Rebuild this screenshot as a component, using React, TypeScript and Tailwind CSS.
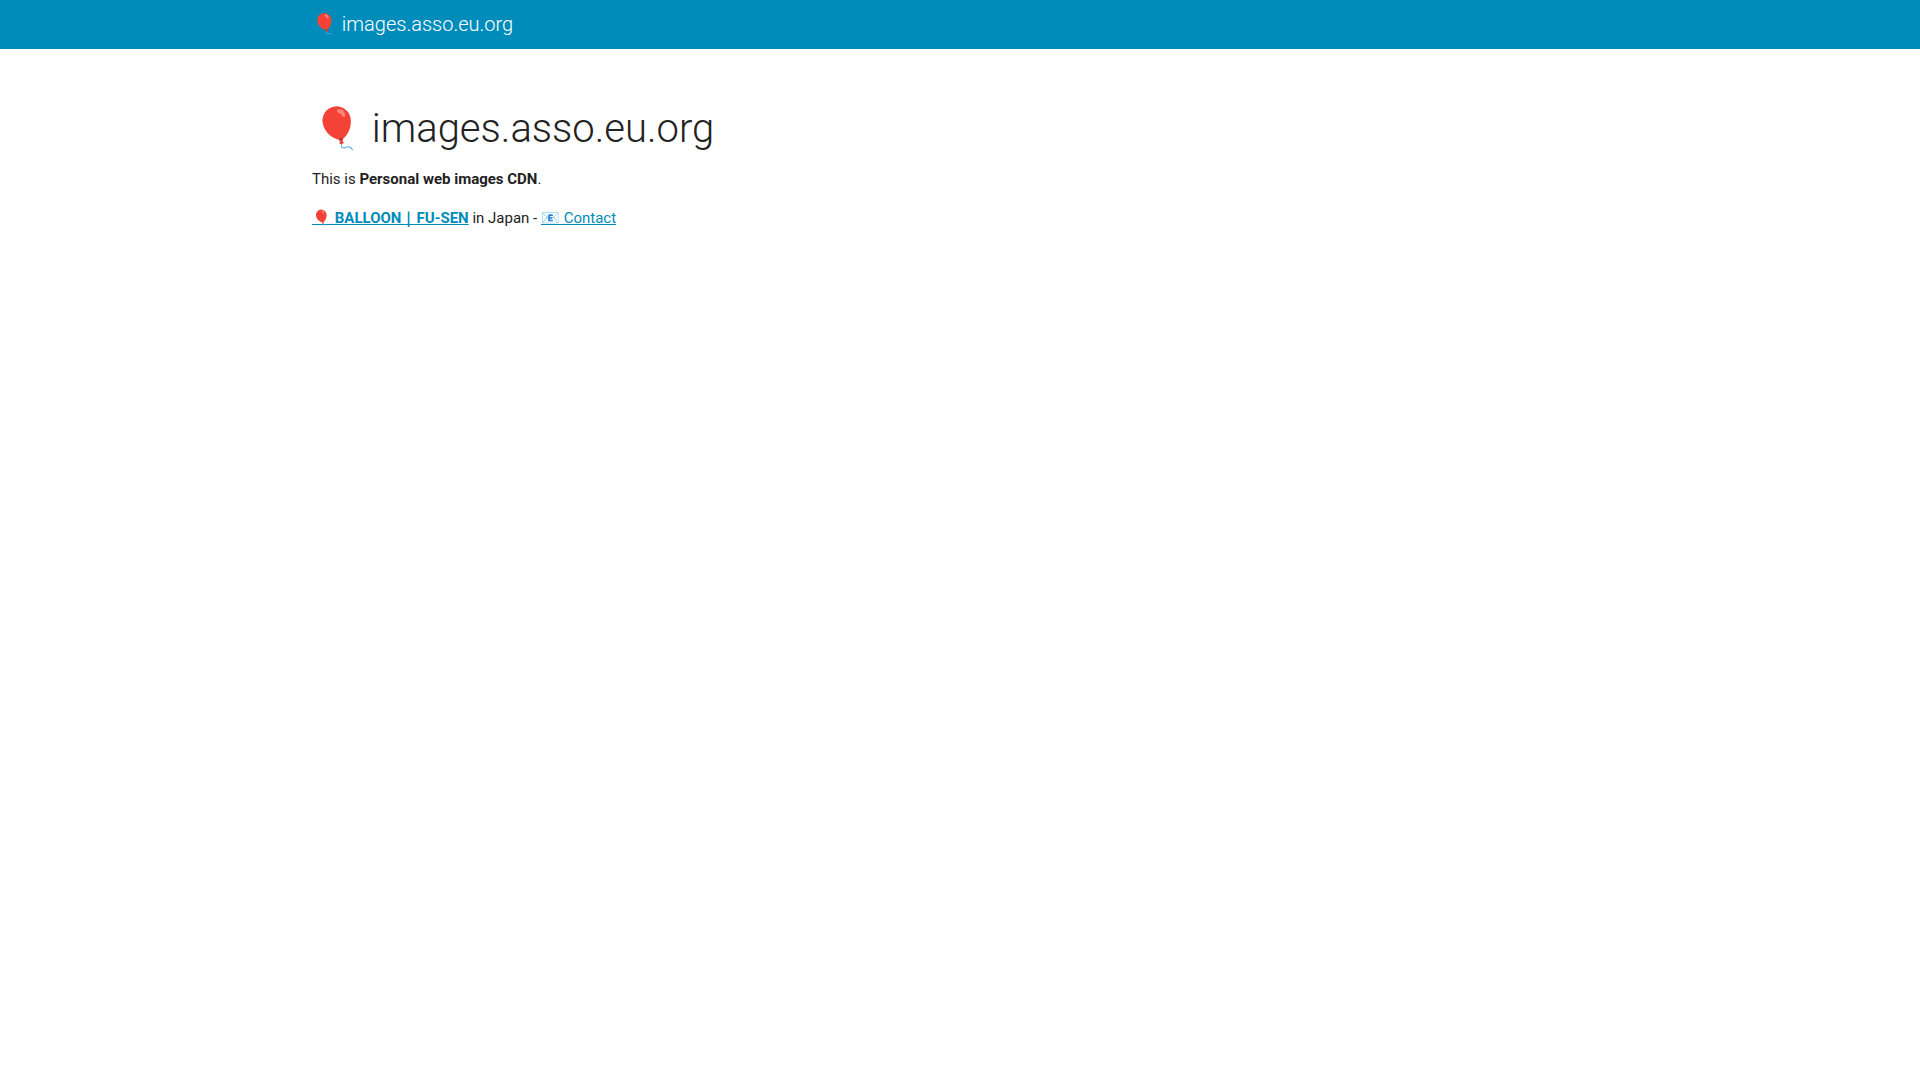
export default function App() {
  return (
    <div className="min-h-screen bg-white font-[Roboto,sans-serif] text-[15px] leading-[23px] text-[#222222]">
      <header className="bg-[#008cba]">
        <div className="mx-auto flex max-w-[1320px] px-3 py-2">
          <a href="#" className="text-xl leading-[33px] font-light text-white">🎈 images.asso.eu.org</a>
        </div>
      </header>
      <main className="mx-auto max-w-[1320px] px-3 pt-14">
        <h1 className="mb-4 text-[40px] leading-[47px] font-light">🎈 images.asso.eu.org</h1>
        <p className="mb-4">This is <strong className="font-bold">Personal web images CDN</strong>.</p>
        <p>
          <a href="#" className="font-bold text-[#008cba] underline">🎈 BALLOON｜FU-SEN</a> in Japan - <a href="#" className="text-[#008cba] underline">📧 Contact</a>
        </p>
      </main>
    </div>
  );
}
